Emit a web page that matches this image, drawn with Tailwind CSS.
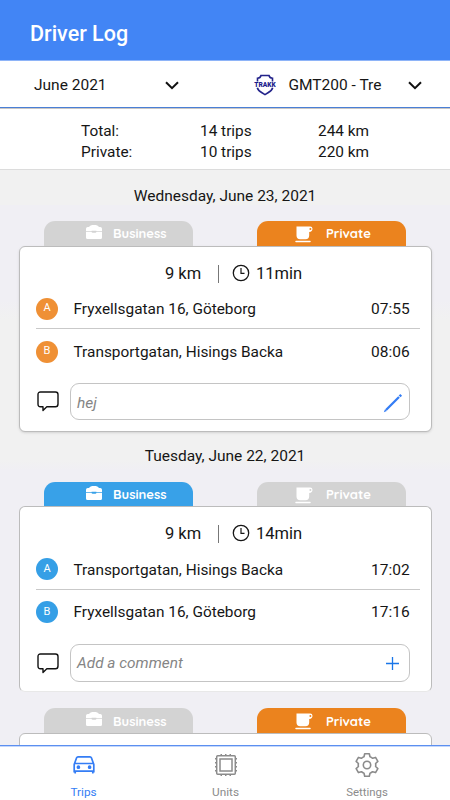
<!DOCTYPE html>
<html lang="en">
<head>
<meta charset="utf-8">
<meta name="viewport" content="width=device-width, initial-scale=1">
<title>Driver Log</title>
<script src="https://cdn.jsdelivr.net/npm/@tailwindcss/browser@4"></script>
</head>
<body class="bg-[#f0eff4] text-[#161616] font-['Roboto',sans-serif]">
<svg class="hidden" xmlns="http://www.w3.org/2000/svg">
  <symbol id="case" viewBox="0 0 16 14"><path fill="#fff" d="M3 2 L4.200 .8 Q4.500 .4 5 .4 L6 0 H10 L11 .4 Q11.500 .4 11.800 .8 L13 2 H14.200 Q16 2 16 3.800 V6.200 H10.400 V5.800 H5.600 V6.200 H0 V3.800 Q0 2 1.800 2Z M0 6.900 H5.600 Q5.800 7.700 6.600 7.700 H9.400 Q10.200 7.700 10.400 6.900 H16 V12.500 Q16 14 14.500 14 H1.500 Q0 14 0 12.500Z"/></symbol>
  <symbol id="cup" viewBox="0 0 18 17"><path fill="#fff" d="M1.500 .5 H15.200 Q17.500 .5 17.500 2.800 Q17.500 5.700 14.200 6 V9.500 Q14.200 13.200 10.500 13.200 H5.200 Q1.500 13.200 1.500 9.500Z"/><circle cx="15.400" cy="3" r="1" fill="currentColor"/><path d="M1 15.400 H15" stroke="#fff" stroke-width="1.500" stroke-linecap="round"/></symbol>
  <symbol id="clock" viewBox="0 0 18 18"><circle cx="9" cy="9" r="7.700" fill="none" stroke="#161616" stroke-width="1.300"/><path d="M9 4 V9.300 H12.500" fill="none" stroke="#161616" stroke-width="1.200"/></symbol>
  <symbol id="bubble" viewBox="0 0 22 21"><path fill="none" stroke="#111" stroke-width="1.400" stroke-linejoin="round" d="M3.500 1 H18.500 Q21 1 21 3.500 V13 Q21 15.800 18.500 15.800 H9.800 L6 19.400 V15.800 H3.500 Q1 15.800 1 13 V3.500 Q1 1 3.500 1Z"/></symbol>
  <symbol id="chev" viewBox="0 0 14 9"><path d="M1 1.200 L7 7.200 L13 1.200" fill="none" stroke="#111" stroke-width="2"/></symbol>
</svg>
<div class="w-[450px] h-[800px] overflow-hidden flex flex-col">
  <header class="h-[61px] shrink-0 bg-[#4285f5] border-b border-[#8eb4f8] pl-[30px] pt-[7px] flex items-center">
    <h1 class="text-white font-medium text-[21.500px] leading-[28px]">Driver Log</h1>
  </header>
  <div class="h-[48px] shrink-0 bg-white border-b border-[#c8c6c6] flex">
    <div class="w-full h-[47px] border-b border-[#4a7fd6] flex items-center pt-[2px] text-[15.500px] pl-[34px]">
      <span class="w-[130.500px] pt-px">June 2021</span>
      <svg class="w-[14px] h-[9px]"><use href="#chev"/></svg>
      <svg class="w-[22px] h-[22px] ml-[75px] -mt-px" viewBox="0 0 22 22"><path d="M3.500 7.500 V4.200 Q6.500 4 7 1.500 H15 Q15.500 4 18.500 4.200 V7.500 M3.300 13.800 Q4 16.500 8 18.800 L11 20.600 L14 18.800 Q18 16.500 18.700 13.800" fill="none" stroke="#23238a" stroke-width="1.600"/><text x="0.300" y="13.300" textLength="21.400" lengthAdjust="spacingAndGlyphs" font-family="Roboto" font-size="6.500" font-weight="900" fill="#1c1c8c">TRAKK</text></svg>
      <span class="ml-[13px] w-[119px] pt-px">GMT200 - Tre</span>
      <svg class="w-[14px] h-[9px]"><use href="#chev"/></svg>
    </div>
  </div>
  <div class="h-[61px] shrink-0 bg-white border-b border-[#dcdcdc] pl-[81px] pt-[12px] grid grid-cols-[119px_118px_100px] auto-rows-[21px] content-start leading-[21px] text-[15.400px]">
    <span>Total:</span><span>14 trips</span><span>244 km</span>
    <span>Private:</span><span>10 trips</span><span>220 km</span>
  </div>
  <main class="flex-1 min-h-0 overflow-hidden bg-linear-[to_bottom,#f1f1f1_35px,#f0eff4_35px,#f0eff4_130px,#f1f1f1_150px,#f1f1f1_290px,#f0eff4_300px]">
    <h2 class="h-[51px] pt-[16px] leading-[21px] text-center text-[15.500px]">Wednesday, June 23, 2021</h2>
    <div class="flex pl-[44px] gap-[64px] h-[25px] text-white font-bold text-[13px] font-['Quicksand','Lato',sans-serif]">
      <div class="w-[149px] bg-[#d3d3d3] rounded-t-[11px] flex items-center pl-[42px]"><svg class="w-4 h-3.5 -mt-[3px]"><use href="#case"/></svg><span class="ml-[11px] pt-px">Business</span></div>
      <div class="w-[149px] bg-[#eb831e] text-[#eb831e] rounded-t-[11px] flex items-center pl-[38px]"><svg class="w-[18px] h-[17px] mt-px"><use href="#cup"/></svg><span class="ml-[13px] pt-px text-white">Private</span></div>
    </div>
    <section class="ml-[19px] w-[413px] h-[186px] bg-white border border-[#bcbcbc] rounded-[6px] shadow-sm">
      <div class="h-[42px] pt-[12px] pl-[145px] flex items-center text-[16.500px]"><span class="w-[53px]">9 km</span><i class="w-px h-[18px] bg-[#777]"></i><svg class="w-[18px] h-[18px] ml-[13px] -mt-[2px] mr-[6px]"><use href="#clock"/></svg><span>11min</span></div>
      <div class="h-[40px] ml-4 w-[384px] border-b border-[#c9c9c9] flex items-center text-[15.500px]"><b class="size-[22px] rounded-full bg-[#ef9035] text-white text-[11px] font-normal flex items-center justify-center">A</b><span class="ml-[15.500px] pt-[3px] w-[297.500px] text-[15.400px]">Fryxellsgatan 16, Göteborg</span><span class="pt-[3px]">07:55</span></div>
      <div class="h-[45px] ml-4 flex items-center text-[15.500px]"><b class="size-[22px] rounded-full bg-[#ef9035] text-white text-[11px] font-normal flex items-center justify-center">B</b><span class="ml-[15.500px] pt-[2px] w-[297.500px] text-[15.400px]">Transportgatan, Hisings Backa</span><span class="pt-[2px]">08:06</span></div>
      <div class="mt-[9px] ml-[16px] flex items-center"><svg class="w-[22px] h-[21px] ml-px"><use href="#bubble"/></svg>
        <div class="ml-[11px] w-[340px] h-[37px] border border-[#c4c4c4] rounded-[9px] pl-[6px] pr-[6px] flex items-center justify-between text-[#858585] italic text-[15.500px]"><span class="pt-[4px]">hej</span><svg class="w-5 h-5 mt-[3px]" viewBox="0 0 20 20"><path d="M3 17 L16 4" stroke="#347df5" stroke-width="2.300"/><path d="M.8 19.200 L2 16.200 L3.800 18Z" fill="#347df5"/><path d="M16.600 3.400 L18.200 1.800" stroke="#347df5" stroke-width="2.500"/></svg></div></div>
    </section>
    <h2 class="h-[50px] pt-[14px] leading-[21px] text-center text-[15.500px]">Tuesday, June 22, 2021</h2>
    <div class="flex pl-[44px] gap-[64px] h-[24px] text-white font-bold text-[13px] font-['Quicksand','Lato',sans-serif]">
      <div class="w-[149px] bg-[#38a1e8] rounded-t-[11px] flex items-center pl-[42px]"><svg class="w-4 h-3.5 -mt-[3px]"><use href="#case"/></svg><span class="ml-[11px] pt-px">Business</span></div>
      <div class="w-[149px] bg-[#d3d3d3] text-[#d3d3d3] rounded-t-[11px] flex items-center pl-[38px]"><svg class="w-[18px] h-[17px] mt-[2px]"><use href="#cup"/></svg><span class="ml-[13px] pt-px text-white">Private</span></div>
    </div>
    <section class="ml-[19px] w-[413px] h-[186px] bg-white border border-b-[#e8e8e8] border-[#bcbcbc] rounded-[6px]">
      <div class="h-[42px] pt-[12px] pl-[145px] flex items-center text-[16.500px]"><span class="w-[53px]">9 km</span><i class="w-px h-[18px] bg-[#777]"></i><svg class="w-[18px] h-[18px] ml-[13px] -mt-[2px] mr-[6px]"><use href="#clock"/></svg><span>14min</span></div>
      <div class="h-[41px] ml-4 w-[384px] border-b border-[#c9c9c9] flex items-center text-[15.500px]"><b class="size-[22px] rounded-full bg-[#359fe6] text-white text-[11px] font-normal flex items-center justify-center">A</b><span class="ml-[15.500px] pt-[3px] w-[297.500px] text-[15.400px]">Transportgatan, Hisings Backa</span><span class="pt-[3px]">17:02</span></div>
      <div class="h-[44px] ml-4 flex items-center text-[15.500px]"><b class="size-[22px] rounded-full bg-[#359fe6] text-white text-[11px] font-normal flex items-center justify-center">B</b><span class="ml-[15.500px] pt-[2px] w-[297.500px] text-[15.400px]">Fryxellsgatan 16, Göteborg</span><span class="pt-[2px]">17:16</span></div>
      <div class="mt-[10px] ml-[16px] flex items-center"><svg class="w-[22px] h-[21px] ml-px"><use href="#bubble"/></svg>
        <div class="ml-[11px] w-[340px] h-[38px] border border-[#c4c4c4] rounded-[9px] pl-[6px] pr-[10px] flex items-center justify-between text-[#858585] italic text-[15.400px]"><span class="pt-px">Add a comment</span><svg class="w-[13px] h-[13px] mt-px" viewBox="0 0 13 13"><path d="M0 6.500 H13 M6.500 0 V13" stroke="#1976e8" stroke-width="1.300"/></svg></div></div>
    </section>
    <div class="mt-[16px] flex pl-[44px] gap-[64px] h-[25px] text-white font-bold text-[13px] font-['Quicksand','Lato',sans-serif]">
      <div class="w-[149px] bg-[#d3d3d3] rounded-t-[11px] flex items-center pl-[42px]"><svg class="w-4 h-3.5 -mt-[3px]"><use href="#case"/></svg><span class="ml-[11px] pt-[2px]">Business</span></div>
      <div class="w-[149px] bg-[#eb831e] text-[#eb831e] rounded-t-[11px] flex items-center pl-[38px]"><svg class="w-[18px] h-[17px] mt-px"><use href="#cup"/></svg><span class="ml-[13px] pt-[2px] text-white">Private</span></div>
    </div>
    <section class="ml-[19px] w-[413px] h-[30px] bg-white border border-[#bcbcbc] rounded-[6px]"></section>
  </main>
  <nav class="h-[55px] shrink-0 bg-white border-t border-[#5c8ff0] shadow-[inset_0_1px_0_#c4d7fb] text-[11.800px] leading-[18px] text-[#8b8b8b] grid grid-cols-[167px_117px_166px]">
    <a class="flex flex-col items-center pt-[7px] text-[#347df5]"><svg class="size-6" viewBox="0 0 24 24" fill="none" stroke="currentColor" stroke-width="1.700"><path d="M2.200 19.500 V11.500 L4.600 4.800 Q5 3.800 6 3.800 H18 Q19 3.800 19.400 4.800 L21.800 11.500 V19.500 M2 18.200 H22 M2.200 10.500 H21.800 M3.200 18 V20.500 M20.800 18 V20.500"/><circle cx="6.400" cy="14.200" r="1" fill="currentColor"/><circle cx="17.600" cy="14.200" r="1" fill="currentColor"/></svg><span class="mt-[6px]">Trips</span></a>
    <a class="flex flex-col items-center pt-[7px]"><svg class="size-6" viewBox="0 0 24 24" fill="none" stroke="currentColor" stroke-width="1.500"><rect x="2.700" y="2.700" width="18.600" height="18.600" rx="1"/><rect x="6" y="6" width="12" height="12"/><path d="M1.500 5 V20 M22.500 5 V20" stroke-width="1" stroke-dasharray="1.500 2.500"/><path d="M6.500 1.500 H18 M6.500 22.500 H18" stroke-width="1" stroke-dasharray="1.500 3"/></svg><span class="mt-[6px]">Units</span></a>
    <a class="flex flex-col items-center pt-[7px]"><svg class="size-6 overflow-visible" viewBox="-12 -12 24 24" fill="none" stroke="currentColor" stroke-width="1.600" stroke-linejoin="round"><circle r="3.700"/><path d="M-3 -8.200 L-2.300 -11.200 H2.300 L3 -8.200 Q4.400 -7.700 5.600 -6.700 L8.550 -7.600 L10.850 -3.600 L8.600 -1.500 Q8.900 0 8.600 1.500 L10.850 3.600 L8.550 7.600 L5.600 6.700 Q4.400 7.700 3 8.200 L2.300 11.200 H-2.300 L-3 8.200 Q-4.400 7.700 -5.600 6.700 L-8.550 7.600 L-10.850 3.600 L-8.600 1.500 Q-8.900 0 -8.600 -1.500 L-10.850 -3.600 L-8.550 -7.600 L-5.600 -6.700 Q-4.400 -7.700 -3 -8.200Z"/></svg><span class="mt-[6px] text-[11.400px]">Settings</span></a>
  </nav>
</div>
</body>
</html>
